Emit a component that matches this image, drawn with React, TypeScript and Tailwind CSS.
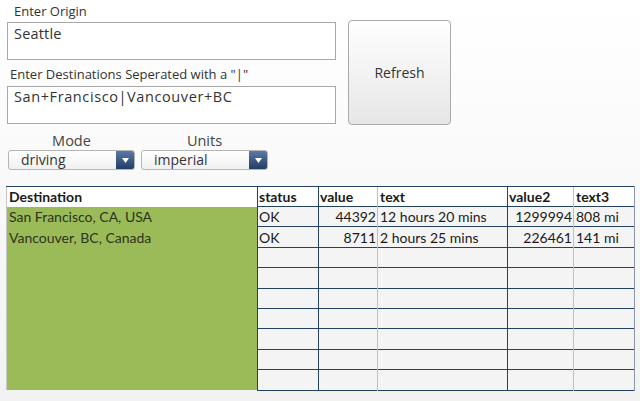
import React from 'react';

const rows = [
  { dest: 'San Francisco, CA, USA', status: 'OK', value: '44392', text: '12 hours 20 mins', value2: '1299994', text3: '808 mi' },
  { dest: 'Vancouver, BC, Canada', status: 'OK', value: '8711', text: '2 hours 25 mins', value2: '226461', text3: '141 mi' },
  { dest: '', status: '', value: '', text: '', value2: '', text3: '' },
  { dest: '', status: '', value: '', text: '', value2: '', text3: '' },
  { dest: '', status: '', value: '', text: '', value2: '', text3: '' },
  { dest: '', status: '', value: '', text: '', value2: '', text3: '' },
  { dest: '', status: '', value: '', text: '', value2: '', text3: '' },
  { dest: '', status: '', value: '', text: '', value2: '', text3: '' },
  { dest: '', status: '', value: '', text: '', value2: '', text3: '' },
];

function Select({ value }: { value: string }) {
  return (
    <div className="flex h-[20px] w-[127px] items-stretch rounded-[3px] border border-[#b5b5b5] bg-gradient-to-b from-white to-[#f0f0f0]">
      <div className="flex-1 pl-[12px] text-[14px] leading-[18px] text-[#333]">{value}</div>
      <div className="flex w-[18px] items-center justify-center rounded-r-[2px] bg-gradient-to-b from-[#5a7aa6] to-[#243e66]">
        <svg width="7" height="5" viewBox="0 0 7 5">
          <path d="M0 0 L7 0 L3.5 5 Z" fill="#fff" />
        </svg>
      </div>
    </div>
  );
}

export default function App() {
  return (
    <div
      className="h-[401px] w-[640px] overflow-hidden bg-gradient-to-b from-white to-[#f2f2f2] text-[#333]"
      style={{ fontFamily: '"Open Sans", "DejaVu Sans", sans-serif' }}
    >
      {/* Inputs + refresh */}
      <div className="flex gap-[12px] pl-[7px] pt-[3px]">
        <div className="w-[329px]">
          <div className="pl-[7px] text-[13px] leading-[17px]">Enter Origin</div>
          <div className="mt-[2px] h-[38px] border border-[#a8a8a8] bg-white px-[6px] pt-[1px] text-[14.5px] leading-[20px] tracking-[0.2px]">
            Seattle
          </div>
          <div className="mt-[6px] pl-[3px] text-[13px] leading-[17px]">
            Enter Destinations Seperated with a "|"
          </div>
          <div className="mt-[3px] h-[38px] border border-[#a8a8a8] bg-white px-[6px] text-[14.5px] leading-[20px] tracking-[0.6px]">
            San+Francisco|Vancouver+BC
          </div>
        </div>
        <button className="mt-[17px] flex h-[105px] w-[103px] items-center justify-center rounded-[4px] border border-[#aaa] bg-gradient-to-b from-white to-[#e6e6e6] pb-[1px] text-[14px] text-[#333]">
          Refresh
        </button>
      </div>

      {/* Mode / Units */}
      <div className="mt-[6px] flex gap-[6px] pl-[8px]">
        <div className="flex flex-col items-center">
          <div className="text-[14.5px] leading-[19px] text-[#444]">Mode</div>
          <Select value="driving" />
        </div>
        <div className="flex flex-col items-center">
          <div className="text-[14.5px] leading-[19px] text-[#444]">Units</div>
          <Select value="imperial" />
        </div>
      </div>

      {/* Results table */}
      <table
        className="ml-[6px] mt-[16px] table-fixed border-collapse text-[14px] leading-[19px] text-[#1a1a1a]"
        style={{ fontFamily: 'Lato, "Liberation Sans", sans-serif' }}
      >
        <colgroup>
          <col className="w-[251px]" />
          <col className="w-[61px]" />
          <col className="w-[59px]" />
          <col className="w-[130px]" />
          <col className="w-[66px]" />
          <col className="w-[61px]" />
        </colgroup>
        <thead>
          <tr className="h-[20px] bg-white font-bold">
            <th className="border-t border-l border-t-[#244062] border-l-[#c8c8c8] pl-[2px] text-left">Destination</th>
            <th className="border-t border-l border-[#244062] pl-[1px] text-left">status</th>
            <th className="border-t border-l border-[#244062] pl-[1px] text-left">value</th>
            <th className="border-t border-l border-t-[#244062] border-l-[#c0c0c0] pl-[2px] text-left">text</th>
            <th className="border-t border-l border-[#244062] pl-[1px] text-left">value2</th>
            <th className="border-t border-r border-l border-t-[#244062] border-l-[#c0c0c0] border-r-[#8a97ab] pl-[2px] text-left">text3</th>
          </tr>
        </thead>
        <tbody>
          {rows.map((r, i) => (
            <tr key={i} className="h-[20.4px]">
              <td className="border-l border-l-[#c8c8c8] bg-[#9bbb59] pl-[2px] text-[#2b3320]">{r.dest}</td>
              <td className="border-t border-l border-[#244062] bg-[#f4f4f4] pl-[1px]">{r.status}</td>
              <td className="border-t border-l border-[#244062] bg-[#f4f4f4] pr-[1px] text-right">{r.value}</td>
              <td className="border-t border-l border-t-[#244062] border-l-[#c0c0c0] bg-[#f4f4f4] pl-[2px]">{r.text}</td>
              <td className="border-t border-l border-[#244062] bg-[#f4f4f4] pr-[1px] text-right">{r.value2}</td>
              <td className="border-t border-r border-l border-t-[#244062] border-l-[#c0c0c0] border-r-[#8a97ab] bg-[#f4f4f4] pl-[2px]">
                {r.text3}
              </td>
            </tr>
          ))}
          <tr>
            <td />
            <td colSpan={5} className="border-t border-[#244062]" />
          </tr>
        </tbody>
      </table>
    </div>
  );
}
